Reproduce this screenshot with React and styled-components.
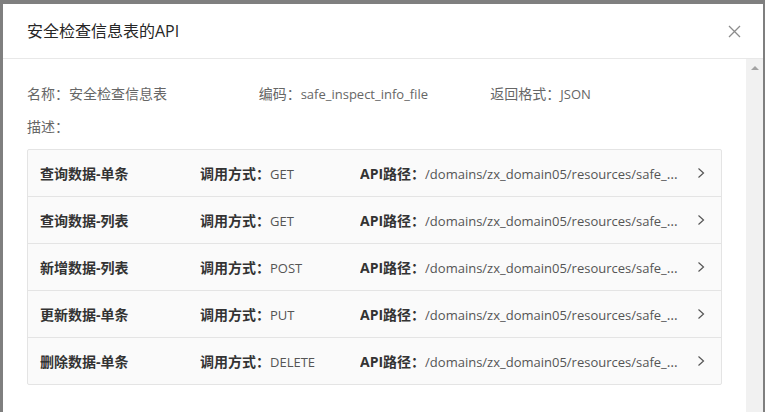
import React from "react";
import styled, { createGlobalStyle } from "styled-components";

const Global = createGlobalStyle`
  html, body { margin: 0; padding: 0; }
  body {
    font-family: "Open Sans", "Noto Sans CJK SC", sans-serif;
    background: #7f7f7f;
    overflow: hidden;
  }
`;

const Backdrop = styled.div`
  width: 765px;
  height: 412px;
  background: #7f7f7f;
  padding: 4px 2px 0 3px;
  box-sizing: border-box;
  overflow: hidden;
`;

const Modal = styled.div`
  width: 760px;
  height: 460px;
  background: #fff;
  display: flex;
  flex-direction: column;
`;

const Header = styled.div`
  height: 54px;
  flex: none;
  display: flex;
  align-items: center;
  justify-content: space-between;
  padding: 0 22px 0 24px;
  border-bottom: 1px solid #e8e8e8;
`;

const Title = styled.div`
  font-size: 16px;
  color: #262626;
  line-height: 22px;
`;

const Close = styled.button`
  border: 0;
  background: none;
  padding: 0;
  width: 14px;
  height: 14px;
  display: flex;
  align-items: center;
  justify-content: center;
  cursor: pointer;
`;

const BodyWrap = styled.div`
  flex: 1;
  display: flex;
  min-height: 0;
`;

const Content = styled.div`
  flex: 1;
  padding: 24px;
  min-width: 0;
`;

const Scrollbar = styled.div`
  width: 17px;
  flex: none;
  background: #f1f1f1;
  display: flex;
  justify-content: center;
  padding-top: 7px;
  box-sizing: border-box;
`;

const Arrow = styled.div`
  width: 0;
  height: 0;
  border-left: 4px solid transparent;
  border-right: 4px solid transparent;
  border-bottom: 4px solid #a3a3a3;
`;

const InfoRow = styled.div`
  display: grid;
  grid-template-columns: ${(p) => (p.$cols ? "1fr 1fr 1fr" : "1fr")};
  font-size: 14px;
  line-height: 22px;
  color: #666;
  margin-bottom: 11px;
`;

const Latin = styled.span`
  font-size: 13px;
`;

const List = styled.div`
  border: 1px solid #e4e4e4;
  border-radius: 2px;
  background: #fafafa;
`;

const Row = styled.div`
  height: 46px;
  display: flex;
  align-items: center;
  padding: 0 14px 0 12px;
  font-size: 14px;
  color: #333;
  & + & {
    border-top: 1px solid #e4e4e4;
  }
`;

const Name = styled.div`
  width: 160px;
  flex: none;
  font-weight: 700;
`;

const Cell = styled.div`
  width: ${(p) => (p.$grow ? "auto" : "160px")};
  flex: ${(p) => (p.$grow ? "1" : "none")};
  min-width: 0;
  white-space: nowrap;
  overflow: hidden;
  text-overflow: ellipsis;
  color: #555;
  padding-right: ${(p) => (p.$grow ? "16px" : "0")};
`;

const Label = styled.span`
  font-weight: 700;
  color: #333;
`;

const Chevron = styled.span`
  flex: none;
  width: 12px;
  display: flex;
  justify-content: center;
`;

const rows = [
  { name: "查询数据-单条", method: "GET" },
  { name: "查询数据-列表", method: "GET" },
  { name: "新增数据-列表", method: "POST" },
  { name: "更新数据-单条", method: "PUT" },
  { name: "删除数据-单条", method: "DELETE" },
];

const path = "/domains/zx_domain05/resources/safe_inspect_info_file/records";

export default function App() {
  return (
    <>
      <Global />
      <Backdrop>
        <Modal>
          <Header>
            <Title>安全检查信息表的API</Title>
            <Close aria-label="close">
              <svg width="13" height="13" viewBox="0 0 13 13">
                <path d="M1 1 L12 12 M12 1 L1 12" stroke="#8c8c8c" strokeWidth="1.3" fill="none" />
              </svg>
            </Close>
          </Header>
          <BodyWrap>
            <Content>
              <InfoRow $cols>
                <div>名称：安全检查信息表</div>
                <div>编码：<Latin>safe_inspect_info_file</Latin></div>
                <div>返回格式：<Latin>JSON</Latin></div>
              </InfoRow>
              <InfoRow>
                <div>描述：</div>
              </InfoRow>
              <List>
                {rows.map((r) => (
                  <Row key={r.name}>
                    <Name>{r.name}</Name>
                    <Cell>
                      <Label>调用方式：</Label>
                      <Latin>{r.method}</Latin>
                    </Cell>
                    <Cell $grow>
                      <Label>API路径：</Label>
                      <Latin>{path}</Latin>
                    </Cell>
                    <Chevron>
                      <svg width="8" height="12" viewBox="0 0 8 12">
                        <path d="M1.5 1.5 L6.5 6 L1.5 10.5" stroke="#555" strokeWidth="1.2" fill="none" />
                      </svg>
                    </Chevron>
                  </Row>
                ))}
              </List>
            </Content>
            <Scrollbar>
              <Arrow />
            </Scrollbar>
          </BodyWrap>
        </Modal>
      </Backdrop>
    </>
  );
}
